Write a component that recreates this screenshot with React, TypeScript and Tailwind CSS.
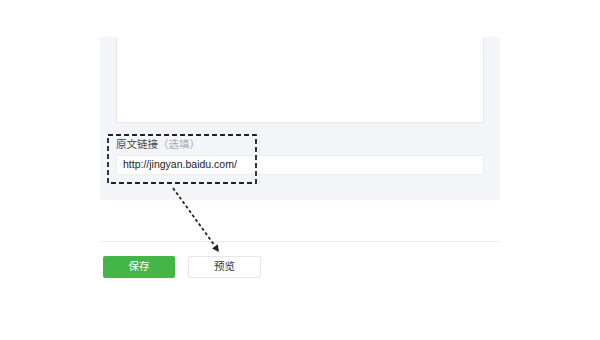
export default function App() {
  return (
    <div className="relative h-[340px] w-[600px] overflow-hidden bg-white font-['Liberation_Sans','Noto_Sans_CJK_SC',sans-serif]">
      <div className="ml-[100px] w-[400px] pt-[37px]">
        {/* editor panel */}
        <div className="bg-[#f4f5f9] px-4 pb-[25px]">
          <div className="h-[86px] border-x border-b border-[#e6e8ed] bg-white" />
          <div className="mt-[14px] text-[10.5px] leading-[14px] text-[#444]">
            原文链接<span className="text-[#aaa]">（选填）</span>
          </div>
          <div className="mt-[4px] flex h-[20px] items-center border border-[#eceef2] bg-white px-[6px] text-[10.5px] text-[#222]">
            http://jingyan.baidu.com/
          </div>
        </div>

        <div className="mt-[41px] border-t border-[#e9eaee]" />

        <div className="mt-[14px] flex gap-[13px] pl-[3px]">
          <button className="flex h-[22px] w-[72px] items-center justify-center rounded-[2px] bg-[#44b549] text-[10.5px] text-white">
            保存
          </button>
          <button className="flex h-[22px] w-[73px] items-center justify-center rounded-[2px] border border-[#e4e6ea] bg-white text-[10.5px] text-[#333]">
            预览
          </button>
        </div>
      </div>

      {/* annotation: dashed box + arrow */}
      <svg
        className="absolute left-0 top-0"
        width="600"
        height="340"
        viewBox="0 0 600 340"
      >
        <rect
          x="108"
          y="135"
          width="148"
          height="48"
          fill="none"
          stroke="#222"
          strokeWidth="1.8"
          strokeDasharray="5 3"
        />
        <line
          x1="173"
          y1="188"
          x2="215"
          y2="246"
          stroke="#222"
          strokeWidth="1.8"
          strokeDasharray="3 2.5"
        />
        <polygon points="219,252 212.1,248.4 217.7,244.2" fill="#222" />
      </svg>
    </div>
  );
}
